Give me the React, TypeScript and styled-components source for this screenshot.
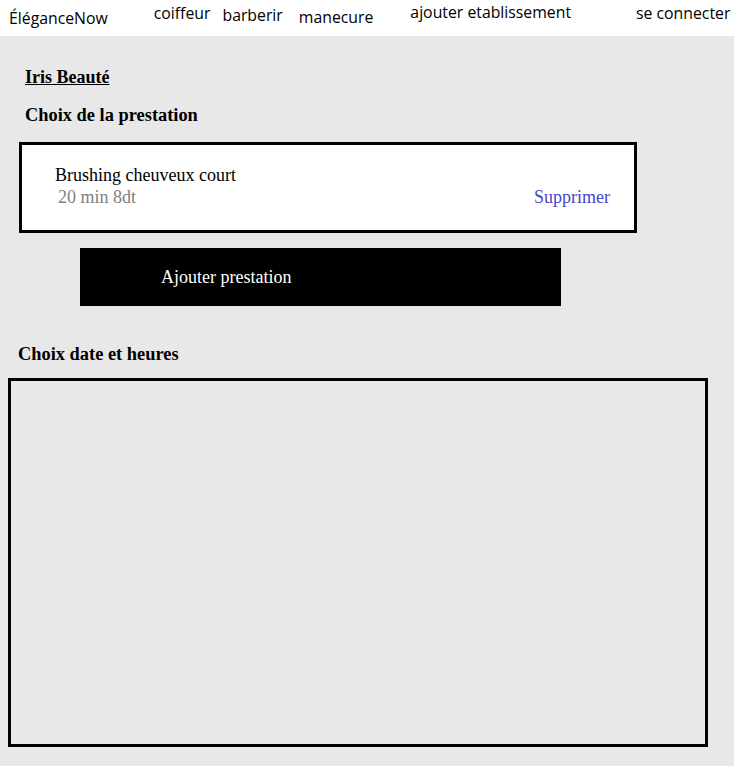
import React from 'react';
import styled, { createGlobalStyle } from 'styled-components';

const GlobalStyle = createGlobalStyle`
	html, body {
		margin: 0;
		padding: 0;
		background: #e8e8e8;
		font-family: 'Liberation Serif', 'Times New Roman', serif;
	}
`;

const Nav = styled.nav`
	display: flex;
	align-items: flex-start;
	height: 36px;
	background: #ffffff;
	font-family: 'Open Sans', 'Noto Sans', sans-serif;
	font-size: 15.8px;
	color: #000;
`;

const NavItem = styled.a<{ $left: number; $top: number }>`
	margin-left: ${(p) => p.$left}px;
	padding-top: ${(p) => p.$top}px;
	line-height: 20px;
	white-space: nowrap;
	cursor: pointer;
`;

const Main = styled.main`
	display: flex;
	flex-direction: column;
	padding: 0 26px 20px 8px;
`;

const Shop = styled.h2`
	margin: 30px 0 0 17px;
	font-size: 18px;
	line-height: 22px;
	text-decoration: underline;
`;

const Heading = styled.h3<{ $indent: number; $top: number }>`
	margin: ${(p) => p.$top}px 0 0 ${(p) => p.$indent}px;
	font-size: 18.4px;
	line-height: 22px;
`;

const Card = styled.div`
	display: flex;
	flex-direction: column;
	height: 85px;
	width: 579px;
	margin: 16px 0 0 11px;
	padding: 0 0 0 33px;
	background: #fff;
	border: 3px solid #000;
`;

const CardRow = styled.div`
	display: flex;
	justify-content: space-between;
	align-items: center;
	padding-right: 24px;
`;

const Name = styled.div`
	margin-top: 19px;
	font-size: 18px;
	line-height: 22px;
`;

const Meta = styled.div`
	padding: 1px 0 0 3px;
	color: #808080;
	font-size: 18px;
	line-height: 20px;
`;

const Remove = styled.button`
	border: 0;
	background: none;
	padding: 0;
	color: #4545c8;
	font-family: 'Liberation Serif', 'Times New Roman', serif;
	font-size: 18px;
	line-height: 20px;
	cursor: pointer;
`;

const AddButton = styled.button`
	display: flex;
	align-items: center;
	width: 481px;
	height: 58px;
	margin: 15px 0 0 72px;
	padding: 0 0 0 81px;
	border: 0;
	background: #000;
	color: #fff;
	font-family: 'Liberation Serif', 'Times New Roman', serif;
	font-size: 18px;
	text-align: left;
	cursor: pointer;
`;

const Calendar = styled.div`
	height: 363px;
	width: 694px;
	margin-top: 13px;
	border: 3px solid #000;
`;

const navLinks = [
	{ label: 'ÉléganceNow', left: 9, top: 8 },
	{ label: 'coiffeur', left: 46, top: 3 },
	{ label: 'barberir', left: 12, top: 5 },
	{ label: 'manecure', left: 16, top: 7 },
	{ label: 'ajouter etablissement', left: 37, top: 2 },
	{ label: 'se connecter', left: 65, top: 3 },
];

const App = (): JSX.Element => {
	return (
		<>
			<GlobalStyle />
			<Nav>
				{navLinks.map((l) => (
					<NavItem key={l.label} $left={l.left} $top={l.top}>
						{l.label}
					</NavItem>
				))}
			</Nav>
			<Main>
				<Shop>Iris Beauté</Shop>
				<Heading $indent={17} $top={16}>
					Choix de la prestation
				</Heading>
				<Card>
					<Name>Brushing cheuveux court</Name>
					<CardRow>
						<Meta>20 min 8dt</Meta>
						<Remove>Supprimer</Remove>
					</CardRow>
				</Card>
				<AddButton>Ajouter prestation</AddButton>
				<Heading $indent={10} $top={37}>
					Choix date et heures
				</Heading>
				<Calendar />
			</Main>
		</>
	);
};

export default App;
